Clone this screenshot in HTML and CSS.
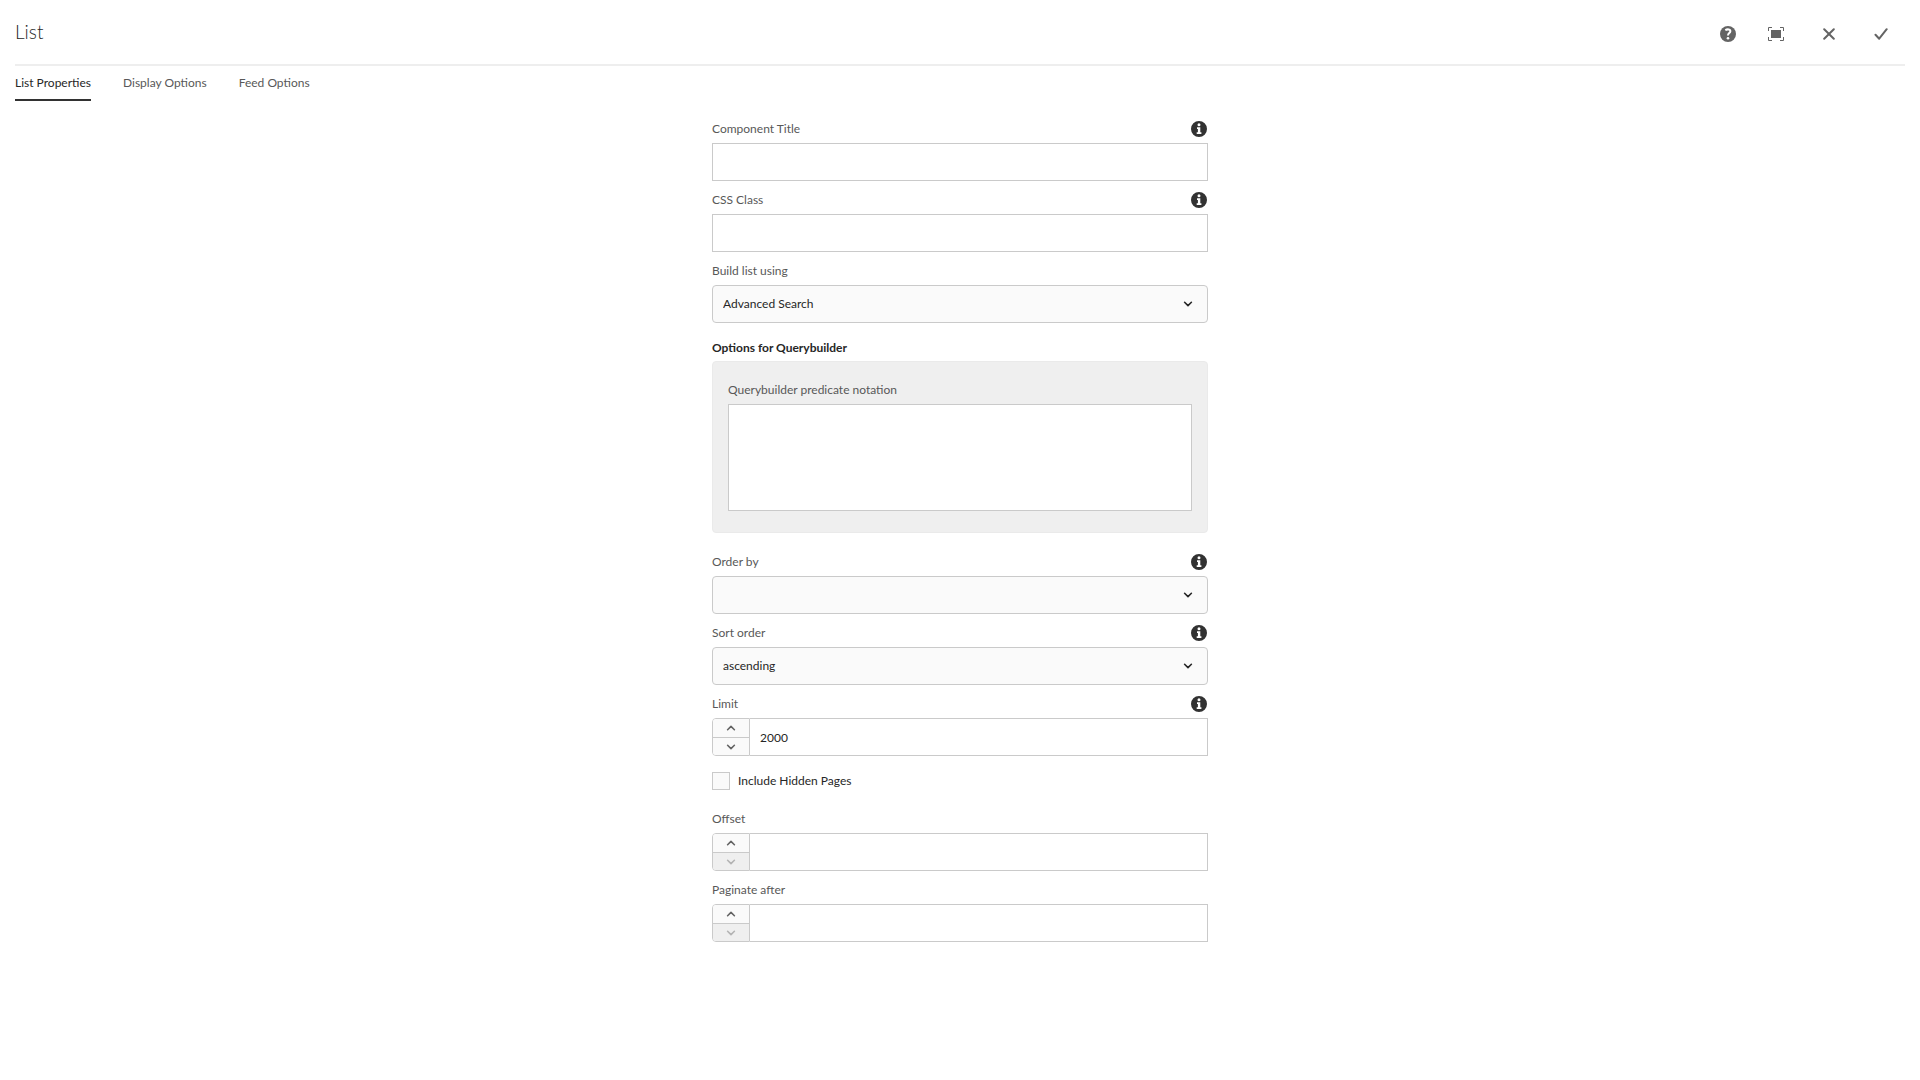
FILE: index.html
```html
<!DOCTYPE html>
<html lang="en">
<head>
<meta charset="utf-8">
<meta name="viewport" content="width=device-width, initial-scale=1">
<title>List</title>
<link rel="stylesheet" href="styles.css">
</head>
<body>
<svg class="sprite" aria-hidden="true">
  <symbol id="info" viewBox="0 0 16 16"><path fill="currentColor" fill-rule="evenodd" d="M8 0a8 8 0 1 0 0 16A8 8 0 0 0 8 0zM8 2.2a1.5 1.5 0 1 1 0 3 1.5 1.5 0 0 1 0-3zM6 6.3h3.3v5H10.400V13H5.700v-1.700h1.200V8H6z"/></symbol>
  <symbol id="chevron" viewBox="0 0 10 6"><path fill="none" stroke="currentColor" stroke-width="1.600" stroke-linecap="round" stroke-linejoin="round" d="M1.600 1.300L5 4.600l3.400-3.300"/></symbol>
</svg>
<header class="header">
  <h1 class="title">List</h1>
  <div class="actions">
    <button type="button" class="action" aria-label="Help"><svg width="16" height="16" viewBox="0 0 16 16"><circle cx="8" cy="8" r="8" fill="currentColor"/><path d="M5.300 4.100C7.600 2.800 10.600 3.300 10.300 5.500 10.100 7.100 8 7.200 8 9.500" fill="none" stroke="#fff" stroke-width="2"/><circle cx="8" cy="12.200" r="1.300" fill="#fff"/></svg></button>
    <button type="button" class="action" aria-label="Toggle fullscreen"><svg width="16" height="14" viewBox="0 0 16 14"><path fill="currentColor" d="M3 3h10v8H3z"/><path d="M.5 4V.5H4M12 .5h3.500V4M15.500 10v3.500H12M4 13.500H.5V10" fill="none" stroke="currentColor"/></svg></button>
    <button type="button" class="action action-wide" aria-label="Cancel"><svg width="12" height="12" viewBox="0 0 12 12"><path d="M1.200 1.200l9.600 9.600M10.800 1.200l-9.600 9.600" stroke="currentColor" stroke-width="2" stroke-linecap="round"/></svg></button>
    <button type="button" class="action" aria-label="Done"><svg width="14" height="12" viewBox="0 0 14 12"><path d="M1.500 6.800l3.700 3.900L12.700 1.200" fill="none" stroke="currentColor" stroke-width="2" stroke-linecap="round" stroke-linejoin="round"/></svg></button>
  </div>
</header>
<nav class="tabs">
  <a class="tab selected" href="#list-properties">List Properties</a>
  <a class="tab" href="#display-options">Display Options</a>
  <a class="tab" href="#feed-options">Feed Options</a>
</nav>
<main>
<form class="form" id="list-properties">
  <div class="field">
    <div class="label-row"><label for="title">Component Title</label><svg class="info"><use href="#info"/></svg></div>
    <input class="control" id="title" type="text">
  </div>
  <div class="field">
    <div class="label-row"><label for="css">CSS Class</label><svg class="info"><use href="#info"/></svg></div>
    <input class="control" id="css" type="text">
  </div>
  <div class="field">
    <div class="label-row"><label for="build">Build list using</label></div>
    <div class="select"><select class="control" id="build"><option>Advanced Search</option></select><svg class="chevron"><use href="#chevron"/></svg></div>
  </div>
  <section class="group">
    <h2 class="group-title">Options for Querybuilder</h2>
    <div class="well">
      <div class="label-row"><label for="query">Querybuilder predicate notation</label></div>
      <textarea class="control area" id="query"></textarea>
    </div>
  </section>
  <div class="field">
    <div class="label-row"><label for="order">Order by</label><svg class="info"><use href="#info"/></svg></div>
    <div class="select"><select class="control" id="order"><option></option></select><svg class="chevron"><use href="#chevron"/></svg></div>
  </div>
  <div class="field">
    <div class="label-row"><label for="sort">Sort order</label><svg class="info"><use href="#info"/></svg></div>
    <div class="select"><select class="control" id="sort"><option>ascending</option></select><svg class="chevron"><use href="#chevron"/></svg></div>
  </div>
  <div class="field">
    <div class="label-row"><label for="limit">Limit</label><svg class="info"><use href="#info"/></svg></div>
    <div class="number">
      <div class="steps"><button type="button" class="step" aria-label="Increase limit"><svg class="arrow up"><use href="#chevron"/></svg></button><button type="button" class="step" aria-label="Decrease limit"><svg class="arrow"><use href="#chevron"/></svg></button></div>
      <input class="control" id="limit" type="number" value="2000">
    </div>
  </div>
  <label class="check"><input type="checkbox" class="box">Include Hidden Pages</label>
  <div class="field">
    <div class="label-row"><label for="offset">Offset</label></div>
    <div class="number">
      <div class="steps"><button type="button" class="step" aria-label="Increase offset"><svg class="arrow up"><use href="#chevron"/></svg></button><button type="button" class="step" aria-label="Decrease offset" disabled><svg class="arrow"><use href="#chevron"/></svg></button></div>
      <input class="control" id="offset" type="number">
    </div>
  </div>
  <div class="field">
    <div class="label-row"><label for="paginate">Paginate after</label></div>
    <div class="number">
      <div class="steps"><button type="button" class="step" aria-label="Increase page size"><svg class="arrow up"><use href="#chevron"/></svg></button><button type="button" class="step" aria-label="Decrease page size" disabled><svg class="arrow"><use href="#chevron"/></svg></button></div>
      <input class="control" id="paginate" type="number">
    </div>
  </div>
</form>
</main>
</body>
</html>
```
FILE: styles.css
```css
* { box-sizing: border-box; }

body {
  margin: 0;
  background: #fff;
  color: #262626;
  font: 12px/20px Lato, "Noto Sans", sans-serif;
}

button, input, select, textarea { font: inherit; color: inherit; }

.sprite { display: none; }

.header {
  display: flex;
  align-items: center;
  justify-content: space-between;
  height: 66px;
  margin: 0 15px;
  border-bottom: 2px solid #eee;
}

.title {
  margin: 0;
  color: #262626;
  font-size: 19px;
  line-height: 28px;
  font-weight: 300;
}

.actions { display: flex; margin-top: 4px; }

.action {
  display: flex;
  align-items: center;
  justify-content: center;
  width: 48px;
  height: 32px;
  padding: 0;
  border: 0;
  background: none;
  color: #646464;
}

.action-wide { width: 57px; }

.tabs {
  display: flex;
  gap: 32px;
  margin: 0 15px;
}

.tab {
  height: 35px;
  line-height: 33px;
  border-bottom: 2px solid transparent;
  color: #585858;
  text-decoration: none;
}

.tab.selected { color: #262626; border-color: #323232; }

.form {
  display: flex;
  flex-direction: column;
  gap: 5px;
  max-width: 496px;
  margin: 14px auto 0;
}

.label-row {
  display: flex;
  align-items: center;
  justify-content: space-between;
  height: 28px;
  color: #585858;
}

.info {
  width: 16px;
  height: 16px;
  margin-right: 1px;
  color: #323232;
}

.control {
  display: block;
  width: 100%;
  height: 38px;
  margin: 0;
  padding: 0 10px;
  border: 1px solid #cacaca;
  border-radius: 0;
  background: #fff;
  appearance: none;
}

.select { display: grid; align-items: center; }

.select > * { grid-area: 1 / 1; }

.select .control { border-radius: 4px; background: #fafafa; }

.chevron {
  justify-self: end;
  width: 10px;
  height: 6px;
  margin-right: 15px;
  pointer-events: none;
}

.group { margin: 6px 0 10px; }

.group-title {
  margin: 0;
  font-size: 12px;
  line-height: 27px;
  font-weight: 700;
}

.well {
  padding: 14px 15px 21px;
  border: 1px solid #eaeaea;
  border-radius: 4px;
  background: #efefef;
}

.area { height: 107px; padding: 8px 10px; resize: none; }

.number { display: flex; }

.number .control { border-left: 0; appearance: textfield; }

.number .control::-webkit-inner-spin-button { appearance: none; }

.steps {
  display: flex;
  flex-direction: column;
  flex: none;
  width: 38px;
  height: 38px;
  border: 1px solid #cacaca;
  border-radius: 4px 0 0 4px;
  overflow: hidden;
}

.step {
  display: flex;
  align-items: center;
  justify-content: center;
  height: 18px;
  padding: 0;
  border: 0;
  background: #fafafa;
  color: #646464;
}

.step + .step { border-top: 1px solid #cacaca; }

.step:disabled { background: #efefef; color: #b4b4b4; }

.arrow { width: 10px; height: 6px; }

.up { transform: rotate(180deg); }

.check {
  display: flex;
  align-items: center;
  gap: 8px;
  height: 20px;
  margin: 10px 0 9px;
}

.box {
  width: 18px;
  height: 18px;
  margin: 0;
  border: 1px solid #cacaca;
  background: #fafafa;
  appearance: none;
}
```
